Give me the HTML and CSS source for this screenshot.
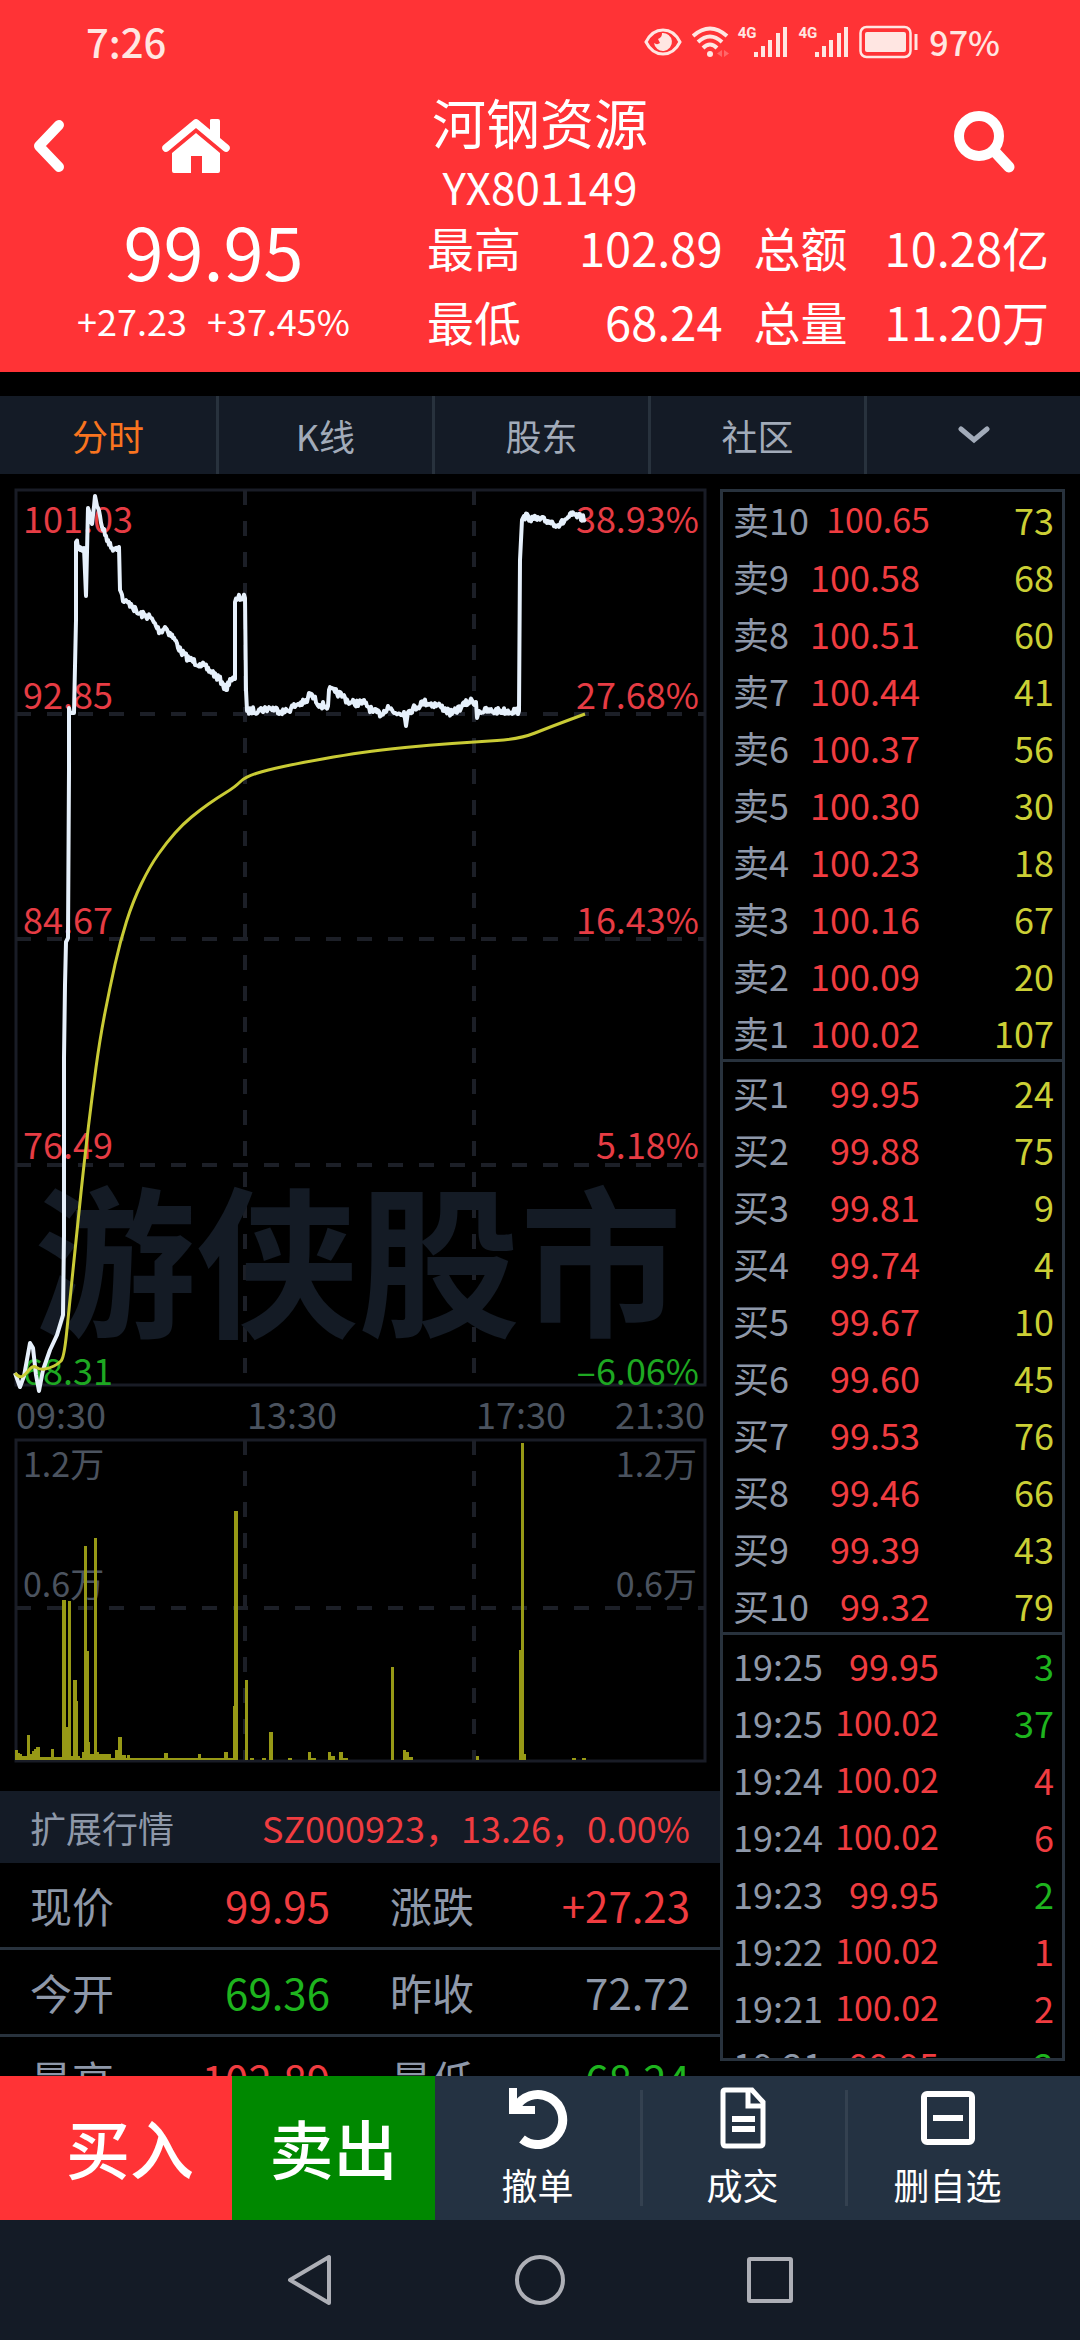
FILE: index.html
```
<!DOCTYPE html><html lang="zh-CN"><head><meta charset="utf-8">
<title>河钢资源 YX801149</title>
<meta name="viewport" content="width=device-width, initial-scale=1.0"/>
<link rel="stylesheet" href="styles.css">
<script src="app.js"></script>
</head>
<body>

<header class="head">
	<div class="status">
		<span class="clock">7:26</span>
		<div class="signals">
			<svg class="eye" width="38" height="28" viewBox="0 0 38 28">
				<path d="M2 14C10 -2 28 -2 36 14C28 30 10 30 2 14Z" fill="none" stroke="currentColor" stroke-width="3"/>
				<path d="M18 5A9 9 0 1 1 10 15A5 5 0 0 0 16 15L14 11A6 6 0 0 0 18 5Z" fill="currentColor"/>
			</svg>
			<svg class="wifi" width="38" height="32" viewBox="0 0 38 32">
				<g fill="none" stroke="currentColor" stroke-width="4">
					<path d="M1 10Q18 -5 35 10"/>
					<path d="M6 16Q18 5 30 16"/>
					<path d="M11 22Q18 15 25 22"/>
				</g>
				<circle cx="18" cy="28" r="3" fill="currentColor"/>
				<path d="M30 24V31L25 27.500ZM32 24V31L37 27.500Z" fill="currentColor" opacity=".3"/>
			</svg>
			<span class="sim"><span class="net">4G</span><svg width="34" height="32" viewBox="0 0 34 32"><path d="M2 26V31M9 20V31M16 14V31M24 7V31M31 1V31" stroke="currentColor" stroke-width="4"/></svg></span>
			<span class="sim"><span class="net">4G</span><svg width="34" height="32" viewBox="0 0 34 32"><path d="M2 26V31M9 20V31M16 14V31M24 7V31M31 1V31" stroke="currentColor" stroke-width="4"/></svg></span>
			<svg class="battery" width="60" height="34" viewBox="0 0 60 34">
				<rect x="1.500" y="2" width="50" height="30" rx="6" fill="none" stroke="currentColor" stroke-width="2.500"/>
				<rect x="6" y="7" width="41" height="20" rx="2" fill="currentColor"/>
				<path d="M57 9V25" stroke="currentColor" stroke-width="3"/>
			</svg>
			<span class="percent">97%</span>
		</div>
	</div>

	<div class="titlebar">
		<div class="left">
			<button aria-label="返回"><svg width="32" height="54" viewBox="0 0 32 54"><path d="M26 6L6 27L26 48" fill="none" stroke="currentColor" stroke-width="10" stroke-linecap="round" stroke-linejoin="round"/></svg></button>
			<button aria-label="首页"><svg width="68" height="56" viewBox="0 0 68 56">
				<path d="M4 30L34 5L64 30" fill="none" stroke="currentColor" stroke-width="7.500" stroke-linecap="round" stroke-linejoin="round"/>
				<path d="M48 2Q48 1 50 1H56Q58 1 58 3V25L48 17Z" fill="currentColor"/>
				<path d="M34 15L58 35V53Q58 55 56 55H40V38H29V55H12Q10 55 10 53V35Z" fill="currentColor"/>
			</svg></button>
		</div>
		<h1>河钢资源<small>YX801149</small></h1>
		<div class="right">
			<button aria-label="搜索"><svg width="62" height="62" viewBox="0 0 62 62">
				<circle cx="25" cy="25" r="20" fill="none" stroke="currentColor" stroke-width="10"/>
				<path d="M42 42L55 56" stroke="currentColor" stroke-width="11" stroke-linecap="round"/>
			</svg></button>
		</div>
	</div>

	<div class="quote">
		<div class="now">
			<div class="price">99.95</div>
			<div class="change"><span>+27.23</span><span>+37.45%</span></div>
		</div>
		<div class="stats">
			<div><span>最高</span><span>102.89</span></div>
			<div><span>总额</span><span>10.28亿</span></div>
			<div><span>最低</span><span>68.24</span></div>
			<div><span>总量</span><span>11.20万</span></div>
		</div>
	</div>
</header>

<nav class="tabs">
	<button class="on">分时</button>
	<button>K线</button>
	<button>股东</button>
	<button>社区</button>
	<button aria-label="更多"><svg width="32" height="18" viewBox="0 0 32 18"><path d="M3 3L16 14L29 3" fill="none" stroke="currentColor" stroke-width="5" stroke-linecap="round"/></svg></button>
</nav>

<main class="main">
	<section class="side">
		<svg class="chart" viewBox="0 474 720 1317">
			<g class="frame">
				<rect x="16" y="490" width="689" height="895"/>
				<rect x="16" y="1440" width="689" height="321"/>
			</g>
			<g class="grid">
				<path d="M16 714H705M16 939H705M16 1165H705M16 1608H705"/>
				<path d="M245 490V1385M474 490V1385M245 1440V1761M474 1440V1761"/>
			</g>
			<text class="mark" x="34" y="1325">游侠股市</text>
			<g class="up">
				<text x="23" y="533">101.03</text>
				<text x="23" y="709">92.85</text>
				<text x="23" y="934">84.67</text>
				<text x="23" y="1159">76.49</text>
			</g>
			<text class="down" x="23" y="1385">68.31</text>
			<g class="up end">
				<text x="699" y="533">38.93%</text>
				<text x="699" y="709">27.68%</text>
				<text x="699" y="934">16.43%</text>
				<text x="699" y="1159">5.18%</text>
			</g>
			<text class="down end" x="699" y="1385">–6.06%</text>
			<g class="axis">
				<text x="16" y="1429">09:30</text>
				<text x="247" y="1429">13:30</text>
				<text x="476" y="1429">17:30</text>
				<text class="end" x="705" y="1429">21:30</text>
			</g>
			<g class="axis vol">
				<text x="23" y="1477">1.2万</text>
				<text x="23" y="1597">0.6万</text>
				<text class="end" x="697" y="1477">1.2万</text>
				<text class="end" x="697" y="1597">0.6万</text>
			</g>
			<g id="volume"></g>
			<path id="line"/>
			<path id="average"/>
		</svg>

		<div class="ext">
			<span>扩展行情</span>
			<span class="up">SZ000923，13.26，0.00%</span>
		</div>
		<table class="detail">
			<tr><th>现价</th><td class="up">99.95</td><th>涨跌</th><td class="up">+27.23</td></tr>
			<tr><th>今开</th><td class="down">69.36</td><th>昨收</th><td>72.72</td></tr>
			<tr><th>最高</th><td class="up">102.89</td><th>最低</th><td class="down">68.24</td></tr>
		</table>
	</section>

	<section class="book">
		<table><tbody id="sell"></tbody></table>
		<table><tbody id="buy"></tbody></table>
		<table><tbody id="trades"></tbody></table>
	</section>
</main>

<div class="actions">
	<button class="buy">买入</button>
	<button class="sell">卖出</button>
	<button class="act"><svg width="62" height="62" viewBox="0 0 62 62">
		<path d="M8 22A25 25 0 1 1 15 52" fill="none" stroke="currentColor" stroke-width="9"/>
		<path d="M2 1H10V19H28V27H2Z" fill="currentColor"/>
	</svg>撤单</button>
	<button class="act"><svg width="62" height="62" viewBox="0 0 62 62">
		<path d="M13 3H40L51 15V56Q51 59 48 59H14Q11 59 11 56V5Q11 3 13 3Z" fill="none" stroke="currentColor" stroke-width="5"/>
		<path d="M36 4V19H51" fill="none" stroke="currentColor" stroke-width="5"/>
		<path d="M20 32H43M20 42H43" stroke="currentColor" stroke-width="6"/>
	</svg>成交</button>
	<button class="act"><svg width="62" height="62" viewBox="0 0 62 62">
		<rect x="7" y="7" width="48" height="48" rx="3" fill="none" stroke="currentColor" stroke-width="6"/>
		<path d="M16 31H46" stroke="currentColor" stroke-width="6"/>
	</svg>删自选</button>
</div>

<nav class="sys">
	<button aria-label="后退"><svg width="54" height="54" viewBox="0 0 54 54"><path d="M46 4V50L7 27Z" fill="none" stroke="currentColor" stroke-width="4" stroke-linejoin="round"/></svg></button>
	<button aria-label="主屏幕"><svg width="54" height="54" viewBox="0 0 54 54"><circle cx="27" cy="27" r="23" fill="none" stroke="currentColor" stroke-width="4"/></svg></button>
	<button aria-label="多任务"><svg width="54" height="54" viewBox="0 0 54 54"><rect x="6" y="6" width="42" height="42" rx="1" fill="none" stroke="currentColor" stroke-width="4"/></svg></button>
</nav>

</body>
</html>
```

FILE: styles.css
```
* {
	box-sizing: border-box;
}
body {
	margin: 0;
	height: 100vh;
	display: flex;
	flex-direction: column;
	overflow: hidden;
	background: #000;
	color: #8e98a9;
	font-family: "Noto Sans CJK SC", sans-serif;
	font-size: 36px;
}
button {
	margin: 0;
	padding: 0;
	border: 0;
	background: none;
	color: inherit;
	font: inherit;
}
svg {
	display: block;
}
.up {
	color: #f03c40;
	fill: #e63c44;
}
.down {
	color: #1eb41e;
	fill: #1ea822;
}

/* header */
.head {
	background: #ff3336;
	color: #fff;
	padding-bottom: 17px;
}
.status {
	height: 84px;
	padding: 0 80px 0 86px;
	display: flex;
	justify-content: space-between;
	align-items: center;
	color: #ffe6e2;
}
.clock {
	font-size: 40px;
	font-weight: 500;
	line-height: 40px;
	padding-bottom: 2px;
}
.signals {
	display: flex;
	align-items: center;
}
.wifi {
	margin: 0 8px 0 10px;
}
.sim {
	display: flex;
	align-items: flex-start;
	margin-right: 10px;
}
.net {
	font: bold 15px/15px "Roboto", sans-serif;
	margin-right: -2px;
}
.percent {
	font-size: 34px;
	font-weight: 500;
	line-height: 34px;
	margin-left: 10px;
}
.titlebar {
	display: grid;
	grid-template-columns: 1fr auto 1fr;
	align-items: center;
	padding: 0 64px 0 33px;
	height: 130px;
}
.titlebar .left {
	display: flex;
	align-items: center;
	gap: 97px;
	padding-bottom: 6px;
}
.titlebar .right {
	justify-self: end;
	padding-bottom: 4px;
}
.titlebar h1 {
	margin: 0 0 0 31px;
	font-size: 54px;
	font-weight: normal;
	line-height: 74px;
	text-align: center;
}
.titlebar small {
	display: block;
	font-size: 44px;
	line-height: 54px;
}
.quote {
	display: flex;
	padding-right: 31px;
}
.now {
	width: 427px;
	text-align: center;
}
.price {
	font-size: 72px;
	line-height: 71px;
}
.change {
	display: flex;
	justify-content: center;
	gap: 20px;
	line-height: 70px;
}
.stats {
	flex: 1;
	display: grid;
	grid-template-columns: 1fr 1fr;
	column-gap: 31px;
	font-size: 47px;
	line-height: 66px;
	row-gap: 6px;
}
.stats div {
	display: flex;
	justify-content: space-between;
}

/* tabs */
.tabs {
	display: grid;
	grid-template-columns: repeat(5, 1fr);
	height: 78px;
	margin-top: 24px;
	background: #141b26;
	color: #a2abb9;
}
.tabs button {
	display: flex;
	align-items: center;
	justify-content: center;
	border-left: 3px solid #28323d;
}
.tabs button:first-child {
	border: 0;
}
.tabs .on {
	color: #f9741f;
}

/* main */
.main {
	flex: 1;
	min-height: 0;
	display: grid;
	grid-template-columns: 2fr 1fr;
	grid-template-rows: minmax(0, 1fr);
}
.side {
	overflow: hidden;
}
.chart {
	width: 100%;
	font-size: 36px;
}
.frame {
	fill: none;
	stroke: #191c26;
	stroke-width: 3;
}
.grid {
	stroke: #1c1f27;
	stroke-width: 4;
	stroke-dasharray: 15 16;
}
.mark {
	font-size: 162px;
	font-weight: bold;
	fill: #141b25;
}
.axis {
	fill: #4b535f;
}
.vol {
	font-size: 34px;
}
.end {
	text-anchor: end;
}
#volume {
	fill: #979916;
}
#line {
	fill: none;
	stroke: #e6f0fb;
	stroke-width: 4;
	stroke-linejoin: round;
}
#average {
	fill: none;
	stroke: #c9cb35;
	stroke-width: 3;
}
.ext {
	display: flex;
	justify-content: space-between;
	padding: 0 30px;
	line-height: 72px;
	background: #141b26;
	white-space: nowrap;
}
.detail {
	width: 100%;
	border-collapse: collapse;
	table-layout: fixed;
	font-size: 42px;
	line-height: 84px;
}
.detail tr {
	border-bottom: 3px solid #28323d;
}
.detail th {
	padding: 0 0 0 30px;
	font-weight: normal;
	text-align: left;
}
.detail td {
	padding: 0 30px 0 0;
	text-align: right;
}

/* order book */
.book {
	margin: 15px 15px 15px 0;
	border: 3px solid #28323d;
	overflow: hidden;
}
.book table {
	display: block;
	height: 573px;
	padding: 3px 8px 0 10px;
	border-bottom: 3px solid #28323d;
}
.book table:first-child {
	height: 570px;
	padding-top: 0;
}
.book table:last-child {
	border: 0;
}
.book tbody {
	display: block;
}
.book tr {
	display: flex;
	height: 57px;
	line-height: 54px;
}
.book th, .book td {
	padding: 0;
	font-weight: normal;
	text-align: left;
	white-space: nowrap;
}
.level {
	width: 77px;
}
.level.wide {
	width: 87px;
}
.time {
	width: 96px;
}
.book .cost {
	width: 110px;
	text-align: right;
}
.book .tight {
	font-size: 34px;
}
.book .qty {
	flex: 1;
	text-align: right;
}
.amount {
	color: #cbcf35;
}

/* bottom */
.actions {
	display: grid;
	grid-template-columns: 232fr 203fr 205fr 205fr 235fr;
	height: 144px;
	background: #243242;
	color: #fff;
}
.buy, .sell {
	font-size: 64px;
	font-weight: 500;
	padding-bottom: 4px;
}
.buy {
	padding-left: 28px;
	background: #ff3336;
}
.sell {
	background: #008800;
}
.act {
	display: flex;
	flex-direction: column;
	align-items: center;
	padding-top: 11px;
	line-height: 70px;
	background: linear-gradient(#344150, #344150) no-repeat left center / 3px 116px;
}
.sell + .act {
	background: none;
}
.act:last-child {
	padding-right: 30px;
}
.sys {
	display: flex;
	justify-content: center;
	align-items: center;
	gap: 176px;
	height: 120px;
	background: #141b26;
	color: #adafb6;
}
```

FILE: app.js
```
"use strict";

var sell = [
	[ "卖10", "100.65", 73 ], [ "卖9", "100.58", 68 ], [ "卖8", "100.51", 60 ], [ "卖7", "100.44", 41 ], [ "卖6", "100.37", 56 ],
	[ "卖5", "100.30", 30 ], [ "卖4", "100.23", 18 ], [ "卖3", "100.16", 67 ], [ "卖2", "100.09", 20 ], [ "卖1", "100.02", 107 ]
];
var buy = [
	[ "买1", "99.95", 24 ], [ "买2", "99.88", 75 ], [ "买3", "99.81", 9 ], [ "买4", "99.74", 4 ], [ "买5", "99.67", 10 ],
	[ "买6", "99.60", 45 ], [ "买7", "99.53", 76 ], [ "买8", "99.46", 66 ], [ "买9", "99.39", 43 ], [ "买10", "99.32", 79 ]
];
var trades = [
	[ "19:25", "99.95", 3, "down" ], [ "19:25", "100.02", 37, "down" ], [ "19:24", "100.02", 4, "up" ], [ "19:24", "100.02", 6, "up" ],
	[ "19:23", "99.95", 2, "down" ], [ "19:22", "100.02", 1, "up" ], [ "19:21", "100.02", 2, "up" ], [ "19:21", "99.95", 2, "down" ]
];

// x, y
var price = [
	[15,1373],[20,1387],[24,1376],[30,1343],[33,1348],[36,1375],[39,1391],[43,1370],[50,1350],[57,1335],[63,1315],
	[64,1235],[64,1058],[65,985],[66,942],[68,938],[69,770],[69,708],[70,713],[74,713],[76,620],[76,542],[80,550],[84,548],
	[86,596],[88,508],[92,524],[95,496],[98,508],[103,530],[108,540],[111,548],[119,547],[120,590],[124,602],[131,604],[137,613],
	[150,617],[160,632],[165,627],[175,640],[181,652],[190,660],[200,664],[212,672],[222,682],[226,690],[230,679],[235,679],
	[235,602],[238,598],[245,598],[246,690],[247,711],[260,710],[270,708],[285,712],[298,704],[307,702],[309,693],[320,705],
	[328,706],[329,690],[335,692],[343,696],[350,703],[365,703],[373,712],[382,714],[388,706],[394,713],[404,712],[406,726],
	[408,712],[424,702],[440,706],[452,714],[462,706],[470,701],[476,702],[477,718],[479,711],[495,711],[519,711],[520,560],
	[522,520],[524,516],[534,519],[548,521],[560,525],[566,519],[572,515],[585,519]
];
var average = [
	[15,1373],[19,1378],[25,1375],[33,1365],[40,1370],[50,1368],[58,1364],[64,1358],[69,1310],[77,1230],[85,1155],[92,1097],
	[100,1038],[110,987],[120,942],[133,901],[150,866],[167,842],[183,824],[200,810],[217,798],[235,787],[245,777],[267,770],
	[300,763],[345,755],[380,750],[430,745],[474,742],[520,739],[550,727],[585,714]
];
// x, top, width
var volume = [
	[15,1750,3],[18,1753,2],[20,1754,2],[22,1756,5],[27,1735,3],[30,1754,2],[32,1751,2],[34,1749,2],[36,1747,4],[40,1757,11],
	[51,1749,3],[54,1757,8],[62,1600,4],[66,1727,3],[68,1601,3],[71,1756,2],[73,1680,4],[76,1701,2],[78,1756,2],[82,1752,2],
	[84,1546,3],[87,1651,2],[89,1742,1],[90,1754,4],[94,1538,3],[97,1752,2],[99,1754,12],[115,1750,3],[118,1737,4],[122,1755,4],
	[127,1755,3],[164,1753,4],[198,1754,3],[224,1752,4],[233,1706,2],[234,1511,4],[245,1680,3],[250,1758,4],[262,1758,4],
	[269,1732,4],[288,1758,4],[308,1752,3],[311,1758,5],[328,1752,3],[331,1756,4],[339,1752,4],[343,1758,5],[391,1667,3],
	[403,1750,3],[406,1752,3],[409,1757,4],[476,1756,3],[519,1650,2],[521,1443,3],[524,1754,2],[572,1758,4],[582,1758,4],
	[15,1758,223]
];
var bottom = 1760;

var get = function(id) {
	return document.getElementById(id);
};

var cell = function(tr, tag, cls, text) {
	var c = document.createElement(tag);
	c.className = cls;
	c.textContent = text;
	tr.appendChild(c);
};

var showRows = function(id, rows) {
	for (var i = 0; i < rows.length; i++) {
		var r = rows[i];
		var tr = document.createElement("tr");
		var isTrade = r.length > 3;
		var wide = r[0].length == 3;
		var head = isTrade ? "time" : wide ? "level wide" : "level";
		// long price beside a long label gets the smaller size
		var tight = (isTrade || wide) && r[1].length > 5;
		cell(tr, "th", head, r[0]);
		cell(tr, "td", "cost up" + (tight ? " tight" : ""), r[1]);
		cell(tr, "td", "qty " + (isTrade ? r[3] : "amount"), r[2]);
		get(id).appendChild(tr);
	}
};

// adds the tick noise between two points, steep moves stay straight
var seed = 7;
var noise = function() {
	seed = (seed * 16807) % 2147483647;
	return seed / 2147483647 - 0.5;
};

var drawPrice = function(points) {
	var d = "M" + points[0];
	for (var i = 1; i < points.length; i++) {
		var a = points[i - 1];
		var b = points[i];
		var dx = b[0] - a[0];
		if (b[0] > 76 && dx > 2) {
			for (var x = 1; x < dx; x++) {
				var y = a[1] + (b[1] - a[1]) * x / dx + noise() * 7;
				d += "L" + (a[0] + x) + " " + y.toFixed(1);
			}
		}
		d += "L" + b[0] + " " + b[1];
	}
	get("line").setAttribute("d", d);
};

// rounds the corners through the middle of each segment
var drawAverage = function(points) {
	var d = "M" + points[0];
	for (var i = 1; i < points.length - 1; i++) {
		var a = points[i];
		var b = points[i + 1];
		d += "Q" + a + " " + (a[0] + b[0]) / 2 + "," + (a[1] + b[1]) / 2;
	}
	d += "L" + points[points.length - 1];
	get("average").setAttribute("d", d);
};

var drawVolume = function(bars) {
	for (var i = 0; i < bars.length; i++) {
		var b = bars[i];
		var rect = document.createElementNS("http://www.w3.org/2000/svg", "rect");
		rect.setAttribute("x", b[0]);
		rect.setAttribute("y", b[1]);
		rect.setAttribute("width", b[2]);
		rect.setAttribute("height", bottom - b[1]);
		get("volume").appendChild(rect);
	}
};

window.onload = function() {
	showRows("sell", sell);
	showRows("buy", buy);
	showRows("trades", trades);
	drawPrice(price);
	drawAverage(average);
	drawVolume(volume);
};
```
